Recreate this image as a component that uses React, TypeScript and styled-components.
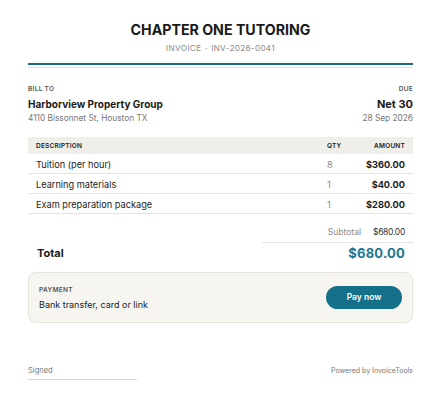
import React from "react";
import styled, { createGlobalStyle } from "styled-components";

const Global = createGlobalStyle`
  html, body { margin: 0; padding: 0; background: #fff; }
  body { font-family: Inter, "Liberation Sans", sans-serif; color: #1c1c1c; -webkit-font-smoothing: antialiased; }
  * { box-sizing: border-box; }
`;

const Page = styled.div`
  width: 440px;
  height: 404px;
  padding: 20px 27px 0 28px;
  display: flex;
  flex-direction: column;
`;

const Header = styled.header`
  display: flex;
  flex-direction: column;
  align-items: center;
`;

const Title = styled.h1`
  margin: 0;
  font-size: 14.2px;
  line-height: 20px;
  font-weight: 700;
  color: #1a1a1a;
`;

const Subtitle = styled.div`
  margin-top: 2px;
  font-size: 8.2px;
  line-height: 12px;
  letter-spacing: 0.3px;
  word-spacing: 1px;
  color: #8a8a8a;
`;

const Rule = styled.div`
  margin-top: 9px;
  height: 2px;
  background: #1b6c82;
`;

const ThinRule = styled.div`
  margin-top: 2px;
  height: 1px;
  background: #e2e2e2;
`;

const Parties = styled.section`
  margin-top: 17px;
  display: flex;
  justify-content: space-between;
`;

const Party = styled.div<{ $right?: boolean }>`
  display: flex;
  flex-direction: column;
  align-items: ${(p) => (p.$right ? "flex-end" : "flex-start")};
`;

const Label = styled.div`
  font-size: 6.5px;
  line-height: 9px;
  font-weight: 600;
  letter-spacing: 0.3px;
  color: #555;
`;

const PartyName = styled.div<{ $big?: boolean }>`
  margin-top: 3px;
  font-size: ${(p) => (p.$big ? "11px" : "10px")};
  line-height: 14px;
  font-weight: 700;
  color: #1a1a1a;
`;

const PartyMeta = styled.div`
  margin-top: 1px;
  font-size: 8.3px;
  line-height: 12px;
  color: #777;
`;

const Table = styled.div`
  margin-top: 13px;
  display: flex;
  flex-direction: column;
`;

const HeadRow = styled.div`
  display: grid;
  grid-template-columns: 1fr 22px 57px;
  align-items: center;
  height: 17px;
  padding: 0 8px;
  background: #efeee8;
  font-size: 6.5px;
  font-weight: 600;
  letter-spacing: 0.2px;
  color: #222;
`;

const Row = styled.div`
  display: grid;
  grid-template-columns: 1fr 22px 57px;
  align-items: center;
  height: 20px;
  padding: 2px 8px 0 8px;
  border-bottom: 1px solid #e3e3e3;
  font-size: 9.2px;
  color: #1c1c1c;
`;

const Qty = styled.div<{ $head?: boolean }>`
  padding-left: 1px;
  color: ${(p) => (p.$head ? "#222" : "#8a8a8a")};
`;

const Amount = styled.div<{ $head?: boolean }>`
  text-align: right;
  font-weight: ${(p) => (p.$head ? 600 : 700)};
`;

const Totals = styled.section`
  margin-top: 12px;
  display: flex;
  flex-direction: column;
  align-items: flex-end;
`;

const SubRow = styled.div`
  width: 151px;
  display: flex;
  justify-content: flex-end;
  gap: 12px;
  padding: 0 8px 4px 0;
  border-bottom: 1px solid #e3e3e3;
  font-size: 8.5px;
  line-height: 12px;
`;

const SubLabel = styled.span`
  color: #888;
`;

const SubValue = styled.span`
  color: #333;
  letter-spacing: -0.3px;
`;

const TotalRow = styled.div`
  align-self: stretch;
  margin-top: 2px;
  padding: 0 8px 0 9px;
  display: flex;
  justify-content: space-between;
  align-items: center;
  height: 16px;
`;

const TotalLabel = styled.span`
  font-size: 11px;
  font-weight: 700;
  color: #1a1a1a;
`;

const TotalValue = styled.span`
  font-size: 13px;
  font-weight: 700;
  color: #1b7790;
  letter-spacing: 0.2px;
`;

const PayCard = styled.section`
  margin-top: 11px;
  height: 51px;
  border: 1px solid #e4e3dc;
  border-radius: 8px;
  background: #f6f5f0;
  padding: 0 10px 0 10px;
  display: flex;
  align-items: center;
  justify-content: space-between;
`;

const PayInfo = styled.div`
  display: flex;
  flex-direction: column;
  padding-top: 1px;
`;

const PayText = styled.div`
  margin-top: 4px;
  font-size: 9px;
  line-height: 12px;
  color: #1c1c1c;
`;

const PayButton = styled.button`
  width: 76px;
  height: 23px;
  border: none;
  border-radius: 12px;
  background: #146f88;
  color: #fff;
  font-family: inherit;
  font-size: 8.5px;
  font-weight: 600;
  padding: 0 0 1px 0;
`;

const Footer = styled.footer`
  margin-top: auto;
  margin-bottom: 24px;
  display: flex;
  justify-content: space-between;
  align-items: flex-start;
`;

const Sign = styled.div`
  width: 109px;
  padding-bottom: 3px;
  border-bottom: 1px solid #d8d8d8;
  font-size: 7.5px;
  line-height: 10px;
  color: #777;
`;

const Powered = styled.div`
  font-size: 7px;
  line-height: 10px;
  color: #777;
`;

const items = [
  { d: "Tuition (per hour)", q: "8", a: "$360.00" },
  { d: "Learning materials", q: "1", a: "$40.00" },
  { d: "Exam preparation package", q: "1", a: "$280.00" },
];

export default function App() {
  return (
    <>
      <Global />
      <Page>
        <Header>
          <Title>CHAPTER ONE TUTORING</Title>
          <Subtitle>INVOICE · INV-2026-0041</Subtitle>
        </Header>
        <Rule />
        <ThinRule />
        <Parties>
          <Party>
            <Label>BILL TO</Label>
            <PartyName>Harborview Property Group</PartyName>
            <PartyMeta>4110 Bissonnet St, Houston TX</PartyMeta>
          </Party>
          <Party $right>
            <Label>DUE</Label>
            <PartyName $big>Net 30</PartyName>
            <PartyMeta>28 Sep 2026</PartyMeta>
          </Party>
        </Parties>
        <Table>
          <HeadRow>
            <div>DESCRIPTION</div>
            <Qty $head>QTY</Qty>
            <Amount $head>AMOUNT</Amount>
          </HeadRow>
          {items.map((it) => (
            <Row key={it.d}>
              <div>{it.d}</div>
              <Qty>{it.q}</Qty>
              <Amount>{it.a}</Amount>
            </Row>
          ))}
        </Table>
        <Totals>
          <SubRow>
            <SubLabel>Subtotal</SubLabel>
            <SubValue>$680.00</SubValue>
          </SubRow>
          <TotalRow>
            <TotalLabel>Total</TotalLabel>
            <TotalValue>$680.00</TotalValue>
          </TotalRow>
        </Totals>
        <PayCard>
          <PayInfo>
            <Label>PAYMENT</Label>
            <PayText>Bank transfer, card or link</PayText>
          </PayInfo>
          <PayButton>Pay now</PayButton>
        </PayCard>
        <Footer>
          <Sign>Signed</Sign>
          <Powered>Powered by InvoiceTools</Powered>
        </Footer>
      </Page>
    </>
  );
}
